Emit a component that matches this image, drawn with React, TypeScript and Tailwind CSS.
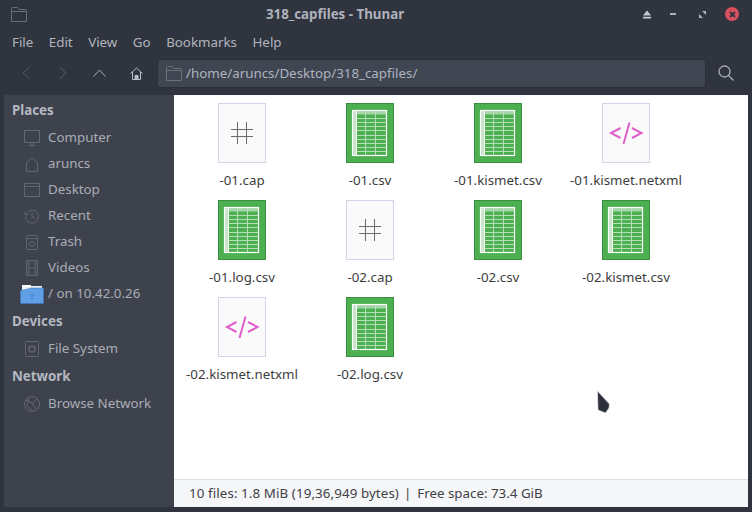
import React from "react";

const dim = "#62666f";

function FolderOutline({ className }: { className: string }) {
  return (
    <svg viewBox="0 0 16 15" className={className} fill="none" stroke="#6a6f7a" strokeWidth="1">
      <path d="M.5 14.5V1.5a1 1 0 0 1 1-1h5l1.5 2h6.5a1 1 0 0 1 1 1v11z" />
      <path d="M.5 4.5h15" />
    </svg>
  );
}

function Sheet() {
  const rows = [15, 19, 23, 27, 32, 36, 40, 44, 48];
  return (
    <svg viewBox="0 0 48 60" className="w-12 h-[60px]">
      <rect x=".5" y=".5" width="47" height="59" fill="#4caf50" stroke="#388e3c" />
      <rect x="7" y="8" width="33" height="3.5" fill="#a5d6a7" />
      <rect x="7" y="8" width="3" height="44" fill="#c8e6c9" />
      {rows.map((y) => (
        <path key={y} d={`M10 ${y}.5h30`} stroke="#b5deb7" />
      ))}
      <path d="M19.5 8v44M29.5 8v44" stroke="#b5deb7" />
      <path d="M10.5 8v44" stroke="#fff" />
      <rect x="6.5" y="7.5" width="34" height="45" fill="none" stroke="#fff" strokeWidth="1.2" />
    </svg>
  );
}

function Cap() {
  return (
    <svg viewBox="0 0 48 60" className="w-12 h-[60px]">
      <rect x=".5" y=".5" width="47" height="59" fill="#fafafa" stroke="#d0d5e5" />
      <path d="M19.5 19v22M28.5 19v22M13 26.5h22M13 33.5h22" stroke="#6a6a6a" strokeWidth="1" fill="none" />
    </svg>
  );
}

function Xml() {
  return (
    <svg viewBox="0 0 48 60" className="w-12 h-[60px]">
      <rect x=".5" y=".5" width="47" height="59" fill="#fafafa" stroke="#d0d5e5" />
      <path d="M18.5 25l-9.5 5 9.5 5M30 25l9.5 5-9.5 5M27.5 19.5l-6 21.5" stroke="#e05fc9" strokeWidth="2" fill="none" />
    </svg>
  );
}

const files: [string, "cap" | "csv" | "xml"][] = [
  ["-01.cap", "cap"],
  ["-01.csv", "csv"],
  ["-01.kismet.csv", "csv"],
  ["-01.kismet.netxml", "xml"],
  ["-01.log.csv", "csv"],
  ["-02.cap", "cap"],
  ["-02.csv", "csv"],
  ["-02.kismet.csv", "csv"],
  ["-02.kismet.netxml", "xml"],
  ["-02.log.csv", "csv"],
];

function SideIcon({ name }: { name: string }) {
  const p = { fill: "none", stroke: dim, strokeWidth: 1 };
  return (
    <svg viewBox="0 0 16 16" className="w-4 h-4 shrink-0" {...p}>
      {name === "computer" && (
        <>
          <rect x=".5" y=".5" width="15" height="12" />
          <path d="M5 15.5h6M6.5 13v2M9.5 13v2" />
        </>
      )}
      {name === "home" && <path d="M2.5 15.5V6.5L8 1.5l5.5 5v9z" />}
      {name === "desktop" && (
        <>
          <rect x=".5" y="1.5" width="15" height="13" />
          <path d="M.5 4.5h15" />
        </>
      )}
      {name === "recent" && (
        <>
          <path d="M3 4.5a6.5 6.5 0 1 1-1.5 4" />
          <path d="M1 3.5v3h3M8 4.5v4l3 1.5" />
        </>
      )}
      {name === "trash" && (
        <>
          <rect x="2.5" y="1.5" width="11" height="14" rx="1" />
          <path d="M2.5 4.5h11" />
          <circle cx="8" cy="10" r="2.5" />
        </>
      )}
      {name === "videos" && (
        <>
          <rect x="2.5" y=".5" width="11" height="15" />
          <path d="M5 .5v15M11 .5v15M5 8h6M2.5 4h2.5M2.5 8h2.5M2.5 12h2.5M11 4h2.5M11 8h2.5M11 12h2.5" />
        </>
      )}
      {name === "disk" && (
        <>
          <rect x="1.5" y=".5" width="13" height="15" rx="1" />
          <circle cx="8" cy="8" r="3" strokeWidth="1.6" />
        </>
      )}
      {name === "net" && (
        <>
          <circle cx="8" cy="8" r="7.5" />
          <path d="M2 4l6 3 4 6M8 7l5-4M5 1.5L3 10l6 5" />
        </>
      )}
    </svg>
  );
}

function NetFolder() {
  return (
    <svg viewBox="0 0 24 20" className="w-6 h-5 shrink-0">
      <path d="M2 2h20v8H2z" fill="#eef1f5" />
      <path d="M2 1h9v2H2z" fill="#fff" />
      <path d="M.5 6.5L8 5l3-1h12.5v15.5H.5z" fill="#5f9fe6" stroke="#3f78c0" strokeWidth=".6" />
      <path d="M10 11.5a3.5 3.5 0 0 1 4 0M11 13a2 2 0 0 1 2 0" stroke="#3f78c0" strokeWidth=".8" fill="none" />
      <circle cx="12" cy="14.7" r=".7" fill="#3f78c0" />
    </svg>
  );
}

function Item({ icon, label }: { icon: string; label: string }) {
  return (
    <div className="h-[26px] flex items-center pl-[20px]">
      {icon === "folder" ? (
        <span className="w-6 flex justify-start -ml-[4px] mr-[4px]">
          <NetFolder />
        </span>
      ) : (
        <span className="w-6 flex">
          <SideIcon name={icon} />
        </span>
      )}
      <span className="text-[13.33px] leading-none text-[#a9adb6] whitespace-nowrap">{label}</span>
    </div>
  );
}

function Head({ label }: { label: string }) {
  return (
    <div className="h-[29px] pt-[1px] flex items-center pl-[8px] text-[13.33px] font-bold text-[#b4b8c0]">{label}</div>
  );
}

export default function App() {
  return (
    <div
      className="w-[752px] h-[512px] bg-[#2f343f] flex flex-col overflow-hidden relative text-[#afb8c6]"
      style={{ fontFamily: '"Noto Sans", sans-serif' }}
    >
      {/* title bar */}
      <div className="h-[28px] flex items-center shrink-0 pl-[11px] pr-[13px]">
        <FolderOutline className="w-4 h-[15px]" />
        <div className="flex-1 text-center text-[13.33px] font-bold text-[#aeb2ba] pt-[1px]">318_capfiles - Thunar</div>
        <div className="flex items-center">
          <svg viewBox="0 0 10 9" className="w-[9px] h-[9px]">
            <path d="M4.5 0l4.5 5.5H0zM0 7h9v2H0z" fill="#c4c8d0" />
          </svg>
          <span className="ml-[18px] w-[6px] h-[2px] bg-[#aeb2ba]" />
          <svg viewBox="0 0 7 7" className="ml-[23px] w-[7px] h-[7px]">
            <path d="M3 0h4v4zM0 3l4 4H0z" fill="#aeb2ba" />
          </svg>
          <span className="ml-[19px] w-[14px] h-[14px] rounded-full bg-[#d9515d] flex items-center justify-center">
            <svg viewBox="0 0 7 7" className="w-[7px] h-[7px]">
              <path d="M1 1l5 5M6 1L1 6" stroke="#2f343f" strokeWidth="1.8" />
            </svg>
          </span>
        </div>
      </div>

      {/* menu */}
      <div className="h-[28px] shrink-0 flex items-center pl-[12px] pt-[1px] gap-[15.5px] text-[13.33px] text-[#b0b4bc]">
        <span>File</span>
        <span>Edit</span>
        <span>View</span>
        <span>Go</span>
        <span>Bookmarks</span>
        <span>Help</span>
      </div>

      {/* toolbar */}
      <div className="h-[39px] shrink-0 flex items-center pb-[5px]">
        <div className="w-[157px] flex items-center shrink-0">
          <svg viewBox="0 0 8 12" className="ml-[22px] w-[8px] h-[12px]" fill="none" stroke="#565b66" strokeWidth="1">
            <path d="M7 .5L1 6l6 5.5" />
          </svg>
          <svg viewBox="0 0 8 12" className="ml-[29px] w-[8px] h-[12px]" fill="none" stroke="#565b66" strokeWidth="1">
            <path d="M1 .5L7 6l-6 5.5" />
          </svg>
          <svg viewBox="0 0 13 8" className="ml-[26px] w-[13px] h-[8px]" fill="none" stroke="#a9adb6" strokeWidth="1">
            <path d="M.5 7.5L6.5 1l6 6.5" />
          </svg>
          <svg viewBox="0 0 13 13" className="ml-[24px] w-[13px] h-[13px]" fill="none" stroke="#b8bcc4" strokeWidth="1">
            <path d="M.5 6.5L6.5 1l6 5.5M2.5 5v7.5h8V5" />
            <path d="M5 12.5V8.5h3v4" fill="#b8bcc4" />
          </svg>
        </div>
        <div className="w-[549px] h-[29px] shrink-0 rounded-[3px] bg-[#404552] border border-[#2b2e39] flex items-center pl-[8px] gap-[4px]">
          <FolderOutline className="w-4 h-[15px]" />
          <span className="text-[13.33px] text-[#aeb4bf] pt-[1px]">/home/aruncs/Desktop/318_capfiles/</span>
        </div>
        <svg viewBox="0 0 16 16" className="ml-[12px] w-4 h-4" fill="none" stroke="#a9adb6" strokeWidth="1.3">
          <circle cx="6.5" cy="6.5" r="5.5" />
          <path d="M10.5 10.5l5 5" />
        </svg>
      </div>

      {/* body */}
      <div className="flex-1 min-h-0 flex pl-[4px] pr-[4px] pb-[5px]">
        <div className="w-[170px] shrink-0 bg-[#3e424d] pt-[1px]">
          <Head label="Places" />
          <Item icon="computer" label="Computer" />
          <Item icon="home" label="aruncs" />
          <Item icon="desktop" label="Desktop" />
          <Item icon="recent" label="Recent" />
          <Item icon="trash" label="Trash" />
          <Item icon="videos" label="Videos" />
          <Item icon="folder" label="/ on 10.42.0.26" />
          <Head label="Devices" />
          <Item icon="disk" label="File System" />
          <Head label="Network" />
          <Item icon="net" label="Browse Network" />
        </div>
        <div className="flex-1 min-w-0 flex flex-col bg-white">
          <div className="flex-1 min-h-0 pt-[8px] pl-[4px] grid grid-cols-[repeat(4,128px)] auto-rows-[97px] content-start">
            {files.map(([n, t]) => (
              <div key={n} className="flex flex-col items-center">
                {t === "cap" ? <Cap /> : t === "csv" ? <Sheet /> : <Xml />}
                <span className="mt-[8px] text-[13.33px] leading-[18px] text-[#3d3d3d] whitespace-nowrap">{n}</span>
              </div>
            ))}
          </div>
          <div className="h-[28px] shrink-0 bg-[#f5f6f7] border-t border-[#dcdfe3] flex items-center pl-[15px] text-[13.33px] text-[#3f4148]">
            <span className="tracking-[0.1px]">10 files: 1.8 MiB (19,36,949 bytes)</span>
            <span className="ml-[5px]">|</span>
            <span className="ml-[6px]">Free space: 73.4 GiB</span>
          </div>
        </div>
      </div>

      {/* mouse pointer */}
      <svg viewBox="0 0 15 24" className="absolute left-[596px] top-[390px] w-[15px] h-[24px]">
        <path d="M1.5 1l11.9 13-.4 4-3.5 5L2 20z" fill="#2b303b" stroke="#dfe1e4" strokeWidth=".7" />
      </svg>
    </div>
  );
}
